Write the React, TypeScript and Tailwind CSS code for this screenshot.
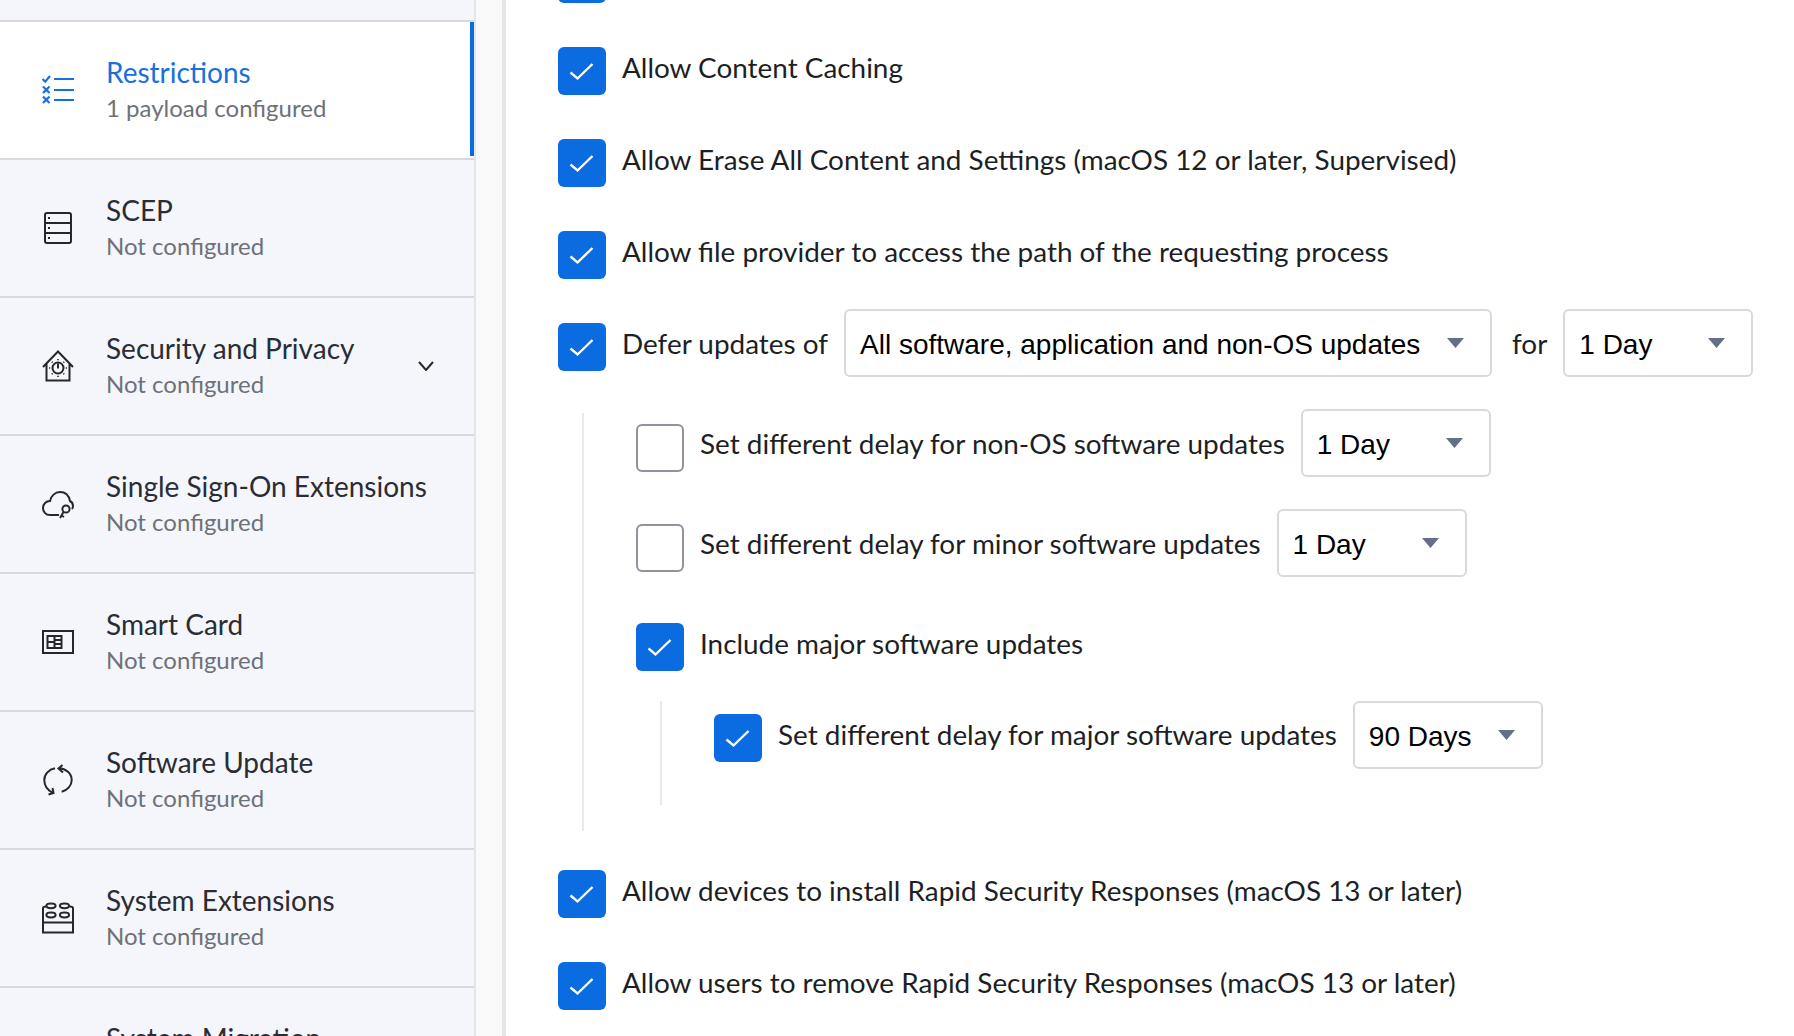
const sideFont = "font-['Lato','Noto_Sans',sans-serif]";

const RestrictionsIcon = () => (
  <svg width="32" height="32" viewBox="0 0 32 32" fill="none" stroke="currentColor">
    <path d="M12 5H32M12 16H32M12 26H32" strokeWidth="1.8" />
    <path d="M0.5 5L3.2 7.6L8 2" strokeWidth="2.2" />
    <path d="M1 12.5L7.5 19M7.5 12.5L1 19M1 22.5L7.5 29M7.5 22.5L1 29" strokeWidth="2.2" />
  </svg>
);

const ScepIcon = () => (
  <svg width="32" height="32" viewBox="0 0 32 32" fill="none" stroke="currentColor" strokeWidth="2">
    <rect x="3" y="1" width="26" height="30" rx="2" />
    <path d="M3 11H29M3 21H29" />
    <path d="M6 6H8M6 16H8M6 26H8" strokeWidth="2" />
  </svg>
);

const SecurityIcon = () => (
  <svg width="32" height="32" viewBox="0 0 32 32" fill="none" stroke="currentColor" strokeWidth="2">
    <path d="M1 17L16 1.5L31 17M4.5 14V30.5H27.5V14" />
    <circle cx="16" cy="18" r="5.5" />
    <path d="M16 13.5V18.5" />
    <path
      d="M16 9V10.2M16 25.8V27M7 18H8.2M23.8 18H25M9.8 11.8L10.6 12.6M21.4 23.4L22.2 24.2M22.2 11.8L21.4 12.6M10.6 23.4L9.8 24.2"
      strokeWidth="1.6"
    />
  </svg>
);

const CloudKeyIcon = () => (
  <svg width="32" height="32" viewBox="0 0 32 32" fill="none" stroke="currentColor" strokeWidth="2">
    <path d="M17 27H8C3.5 27 1 23.5 1 20C1 16 4 13 8 13C9 8 13 4 18 4C24 4 27 8 28 13C30 14 31 16 31 18C31 19 30.8 20 30 21" />
    <circle cx="24" cy="21" r="3.6" />
    <path d="M21.5 24L18 30M19.5 27.5L22 29" />
  </svg>
);

const SmartCardIcon = () => (
  <svg width="32" height="32" viewBox="0 0 32 32" fill="none" stroke="currentColor" strokeWidth="2">
    <rect x="1" y="5" width="30" height="22" />
    <rect x="5.5" y="10" width="14" height="12" strokeWidth="2" />
    <path d="M12.5 10V22M5.5 16H12.5M12.5 14H19.5M12.5 18H19.5" strokeWidth="2" />
  </svg>
);

const UpdateIcon = () => (
  <svg width="32" height="32" viewBox="0 0 32 32" fill="none" stroke="currentColor" strokeWidth="2">
    <path d="M17 4.3C24 4.6 29.7 9.5 29.7 16C29.7 21.5 25.5 26.5 19.7 27.7" />
    <path d="M13 4.3C7 5.5 2.3 10 2.3 16C2.3 21.5 6 26.5 11 29" />
    <path d="M20.5 1L16.5 4.5L21 8.5M6.5 30.5L11.5 29L10.5 24" />
  </svg>
);

const ExtensionIcon = () => (
  <svg width="32" height="32" viewBox="0 0 32 32" fill="none" stroke="currentColor" strokeWidth="2">
    <path d="M1 6V30.5H31V6M1 20.5H31" />
    <path d="M1 6C1 5 2 4.5 4.5 4.5M31 6C31 5 30 4.5 27.5 4.5" />
    <ellipse cx="9" cy="3.8" rx="4.6" ry="2.4" />
    <ellipse cx="22.5" cy="3.8" rx="4.6" ry="2.4" />
    <ellipse cx="9" cy="13" rx="4.6" ry="2.4" />
    <ellipse cx="22.5" cy="13" rx="4.6" ry="2.4" />
  </svg>
);

const payloads = [
  { name: "Restrictions", sub: "1 payload configured", icon: <RestrictionsIcon />, active: true },
  { name: "SCEP", sub: "Not configured", icon: <ScepIcon /> },
  { name: "Security and Privacy", sub: "Not configured", icon: <SecurityIcon />, expandable: true },
  { name: "Single Sign-On Extensions", sub: "Not configured", icon: <CloudKeyIcon /> },
  { name: "Smart Card", sub: "Not configured", icon: <SmartCardIcon /> },
  { name: "Software Update", sub: "Not configured", icon: <UpdateIcon /> },
  { name: "System Extensions", sub: "Not configured", icon: <ExtensionIcon /> },
  { name: "System Migration", sub: "", icon: null },
];

const SidebarRow = ({ item }: { item: (typeof payloads)[number] }) => (
  <div
    className={`relative flex h-[138px] shrink-0 items-center border-b-2 border-[#d8d9de] pl-[42px] pr-[40px] ${
      item.active ? "bg-white" : ""
    }`}
  >
    <div className={`w-8 shrink-0 ${item.active ? "text-[#1a6fdc]" : "text-[#25272c]"}`}>{item.icon}</div>
    <div className="ml-8 flex-1">
      <div className={`text-[28px] leading-[36px] ${item.active ? "text-[#1a6fdc]" : "text-[#2a2d34]"}`}>
        {item.name}
      </div>
      <div className="h-9 text-[24px] leading-[36px] text-[#6f7178]">{item.sub}</div>
    </div>
    {item.expandable && (
      <svg width="16" height="10" viewBox="0 0 16 10" fill="none" stroke="#25272c" strokeWidth="2">
        <path d="M1 1L8 9L15 1" />
      </svg>
    )}
    {item.active && <div className="absolute bottom-[2px] right-0 top-0 w-1 bg-[#0b6be0]" />}
  </div>
);

const Checkbox = ({ checked = true, className = "mt-[15px]" }: { checked?: boolean; className?: string }) =>
  checked ? (
    <div className={`h-12 w-12 shrink-0 rounded-[6px] bg-[#0b6be0] ${className}`}>
      <svg width="48" height="48" viewBox="0 0 48 48" fill="none" stroke="white" strokeWidth="2.4">
        <path d="M12.5 25.5L19.5 31.5L34.5 17" />
      </svg>
    </div>
  ) : (
    <div className={`h-12 w-12 shrink-0 rounded-[6px] border-2 border-[#8f939c] bg-white ${className}`} />
  );

const Select = ({ value, width }: { value: string; width: string }) => (
  <div
    className={`flex h-[68px] shrink-0 items-center justify-between rounded-[6px] border-2 border-[#d8d9dc] bg-white pl-[14px] pr-[26px] font-['Liberation_Sans',sans-serif] text-[28px] text-black ${width}`}
  >
    <span className="pt-[3px]">{value}</span>
    <svg width="17" height="10" viewBox="0 0 17 10" fill="#64708a">
      <path d="M0 0H17L8.5 10Z" />
    </svg>
  </div>
);

const Row = ({
  label,
  checked,
  className = "",
  labelClass = "leading-[71px]",
  boxClass,
  children,
}: {
  label: string;
  checked?: boolean;
  className?: string;
  labelClass?: string;
  boxClass?: string;
  children?: React.ReactNode;
}) => (
  <div className={`flex h-[68px] items-start ${className}`}>
    <Checkbox checked={checked} className={boxClass} />
    <span className={`ml-4 whitespace-nowrap text-[27.9px] text-[#1d1f24] ${labelClass}`}>{label}</span>
    {children}
  </div>
);

export default function App() {
  return (
    <div className={`flex h-screen overflow-hidden bg-white ${sideFont}`}>
      <aside className="flex w-[476px] shrink-0 flex-col overflow-hidden border-r-2 border-[#e5e6ea] bg-[#f4f6fb]">
        <div className="h-[22px] shrink-0 border-b-2 border-[#d8d9de]" />
        {payloads.map((item) => (
          <SidebarRow key={item.name} item={item} />
        ))}
      </aside>
      <div className="w-[26px] shrink-0 bg-[#f9f9f9]" />
      <div className="w-1 shrink-0 bg-[#e5e6ea]" />

      <main className="flex-1 overflow-hidden pl-[52px]">
        <div className="-mt-[60px] flex flex-col">
          {/* only the bottom of this checkbox is on screen */}
          <div className="mb-6 h-[68px]">
            <Checkbox />
          </div>
          <Row label="Allow Content Caching" className="mb-6" />
          <Row label="Allow Erase All Content and Settings (macOS 12 or later, Supervised)" className="mb-6" />
          <Row label="Allow file provider to access the path of the requesting process" className="mb-6" />
          <Row label="Defer updates of">
            <div className="ml-4 mt-px">
              <Select value="All software, application and non-OS updates" width="w-[648px]" />
            </div>
            <span className="ml-5 text-[27.9px] leading-[71px] text-[#1d1f24]">for</span>
            <div className="ml-4 mt-px">
              <Select value="1 Day" width="w-[190px]" />
            </div>
          </Row>

          <div className="ml-6 mt-[37px] border-l-2 border-[#e8e9ee] pb-[26px] pl-[52px]">
            <Row
              label="Set different delay for non-OS software updates"
              checked={false}
              labelClass="leading-[68px]"
              className="-mt-1 mb-8"
            >
              <div className="ml-4">
                <Select value="1 Day" width="w-[190px]" />
              </div>
            </Row>
            <Row
              label="Set different delay for minor software updates"
              checked={false}
              labelClass="leading-[68px]"
              className="mb-[31px]"
            >
              <div className="ml-4">
                <Select value="1 Day" width="w-[190px]" />
              </div>
            </Row>
            <Row label="Include major software updates" />
            <div className="ml-6 mt-[29px] border-l-2 border-[#e8e9ee] pb-9 pl-[52px]">
              <Row
                label="Set different delay for major software updates"
                labelClass="leading-[66px]"
                boxClass="mt-[13px]"
                className="-mt-1"
              >
                <div className="ml-4">
                  <Select value="90 Days" width="w-[190px]" />
                </div>
              </Row>
            </div>
          </div>

          <Row label="Allow devices to install Rapid Security Responses (macOS 13 or later)" className="mb-6 mt-6" />
          <Row label="Allow users to remove Rapid Security Responses (macOS 13 or later)" />
        </div>
      </main>
    </div>
  );
}
